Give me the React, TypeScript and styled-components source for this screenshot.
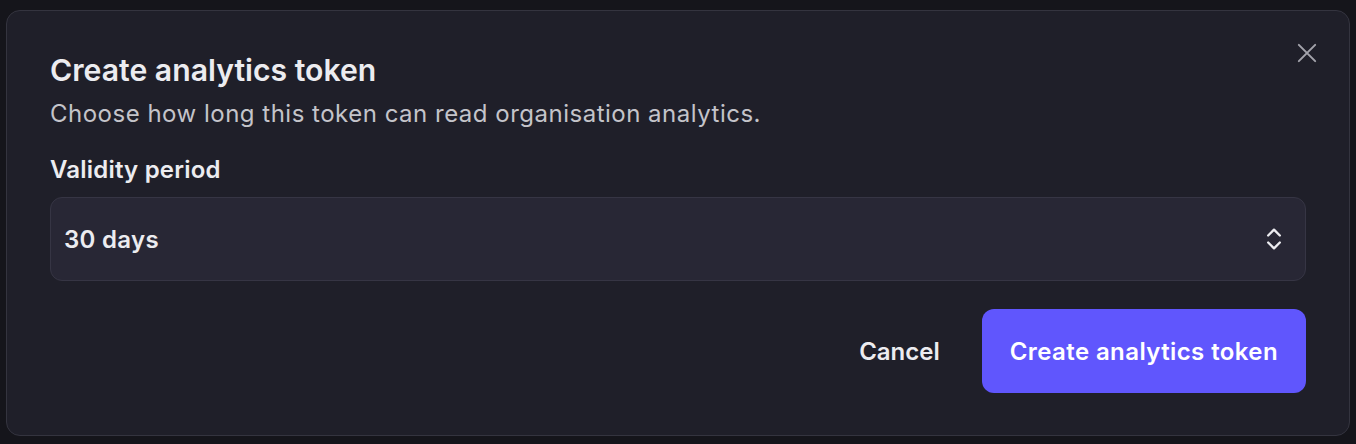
import React from "react";
import styled, { createGlobalStyle } from "styled-components";

const GlobalStyle = createGlobalStyle`
  html, body { margin: 0; padding: 0; background: #15151b; }
  body { font-family: Inter, "Noto Sans", sans-serif; -webkit-font-smoothing: antialiased; }
  * { box-sizing: border-box; }
`;

const Page = styled.div`
  width: 1356px;
  height: 444px;
  padding: 10px 6px 8px 6px;
  background: #15151b;
`;

const Dialog = styled.div`
  position: relative;
  height: 426px;
  background: #1f1f29;
  border: 1px solid #34343f;
  border-radius: 14px;
  padding: 43px 43px 42px 43px;
  display: flex;
  flex-direction: column;
`;

const CloseButton = styled.button`
  position: absolute;
  top: 28px;
  right: 28px;
  width: 28px;
  height: 28px;
  padding: 0;
  border: none;
  background: transparent;
  color: #a3a3ab;
  display: flex;
  align-items: center;
  justify-content: center;
`;

const Title = styled.h2`
  margin: 0;
  font-size: 30.2px;
  line-height: 32px;
  font-weight: 600;
  letter-spacing: 0;
  color: #ececf0;
`;

const Subtitle = styled.p`
  margin: 12px 0 0;
  font-size: 24px;
  line-height: 32px;
  font-weight: 400;
  letter-spacing: 0.5px;
  color: #c4c4ca;
`;

const Label = styled.label`
  margin-top: 24px;
  font-size: 24px;
  line-height: 32px;
  font-weight: 600;
  letter-spacing: 0.2px;
  color: #ececf0;
`;

const Select = styled.div`
  margin-top: 11px;
  height: 84px;
  background: #282735;
  border: 1px solid #363544;
  border-radius: 12px;
  padding: 0 17px 0 13px;
  display: flex;
  align-items: center;
  justify-content: space-between;
  font-size: 24px;
  font-weight: 600;
  letter-spacing: 0.3px;
  color: #ececf0;
`;

const Footer = styled.div`
  margin-top: 28px;
  display: flex;
  justify-content: flex-end;
  align-items: center;
  gap: 21px;
`;

const Button = styled.button<{ $primary?: boolean }>`
  height: 84px;
  border: none;
  border-radius: 12px;
  font-family: inherit;
  font-size: 24px;
  font-weight: 600;
  letter-spacing: ${(p) => (p.$primary ? "0.4px" : "0")};
  padding: 0 ${(p) => (p.$primary ? "28px" : "21px")};
  background: ${(p) => (p.$primary ? "#6056fd" : "transparent")};
  color: ${(p) => (p.$primary ? "#ffffff" : "#ececf0")};
`;

export default function App() {
  return (
    <>
      <GlobalStyle />
      <Page>
        <Dialog>
          <CloseButton aria-label="Close">
            <svg width="28" height="28" viewBox="0 0 24 24" fill="none" stroke="currentColor" strokeWidth="1.7" strokeLinecap="round">
              <path d="M19 5 5 19M5 5l14 14" />
            </svg>
          </CloseButton>
          <Title>Create analytics token</Title>
          <Subtitle>Choose how long this token can read organisation analytics.</Subtitle>
          <Label>Validity period</Label>
          <Select>
            <span>30 days</span>
            <svg width="28" height="28" viewBox="0 0 24 24" fill="none" stroke="currentColor" strokeWidth="2" strokeLinecap="round" strokeLinejoin="round">
              <path d="m7 15 5 5 5-5" />
              <path d="m7 9 5-5 5 5" />
            </svg>
          </Select>
          <Footer>
            <Button>Cancel</Button>
            <Button $primary>Create analytics token</Button>
          </Footer>
        </Dialog>
      </Page>
    </>
  );
}
